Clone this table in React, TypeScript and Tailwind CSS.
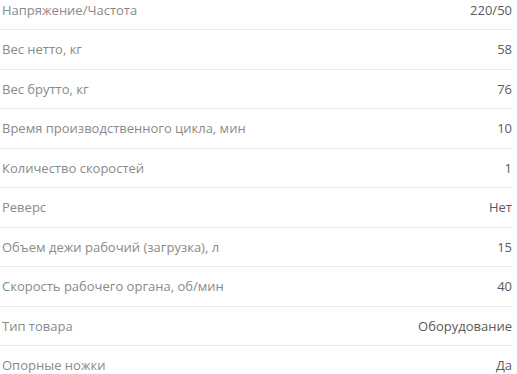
const specs = [
  { name: 'Напряжение/Частота', value: '220/50' },
  { name: 'Вес нетто, кг', value: '58' },
  { name: 'Вес брутто, кг', value: '76' },
  { name: 'Время производственного цикла, мин', value: '10' },
  { name: 'Количество скоростей', value: '1' },
  { name: 'Реверс', value: 'Нет' },
  { name: 'Объем дежи рабочий (загрузка), л', value: '15' },
  { name: 'Скорость рабочего органа, об/мин', value: '40' },
  { name: 'Тип товара', value: 'Оборудование' },
  { name: 'Опорные ножки', value: 'Да' },
];

export default function App() {
  return (
    <div className="h-[374px] w-[517px] overflow-hidden bg-white font-['Open_Sans',sans-serif] text-[13px]">
      <div className="mt-[-9.5px] w-[512px]">
        {specs.map((s) => (
          <div
            key={s.name}
            className="flex h-[39.5px] items-center justify-between border-b border-[#ececec] pl-[2px] leading-5"
          >
            <span className="text-[#8a8a8a]">{s.name}</span>
            <span className="text-[#5a5a5a]">{s.value}</span>
          </div>
        ))}
      </div>
    </div>
  );
}
